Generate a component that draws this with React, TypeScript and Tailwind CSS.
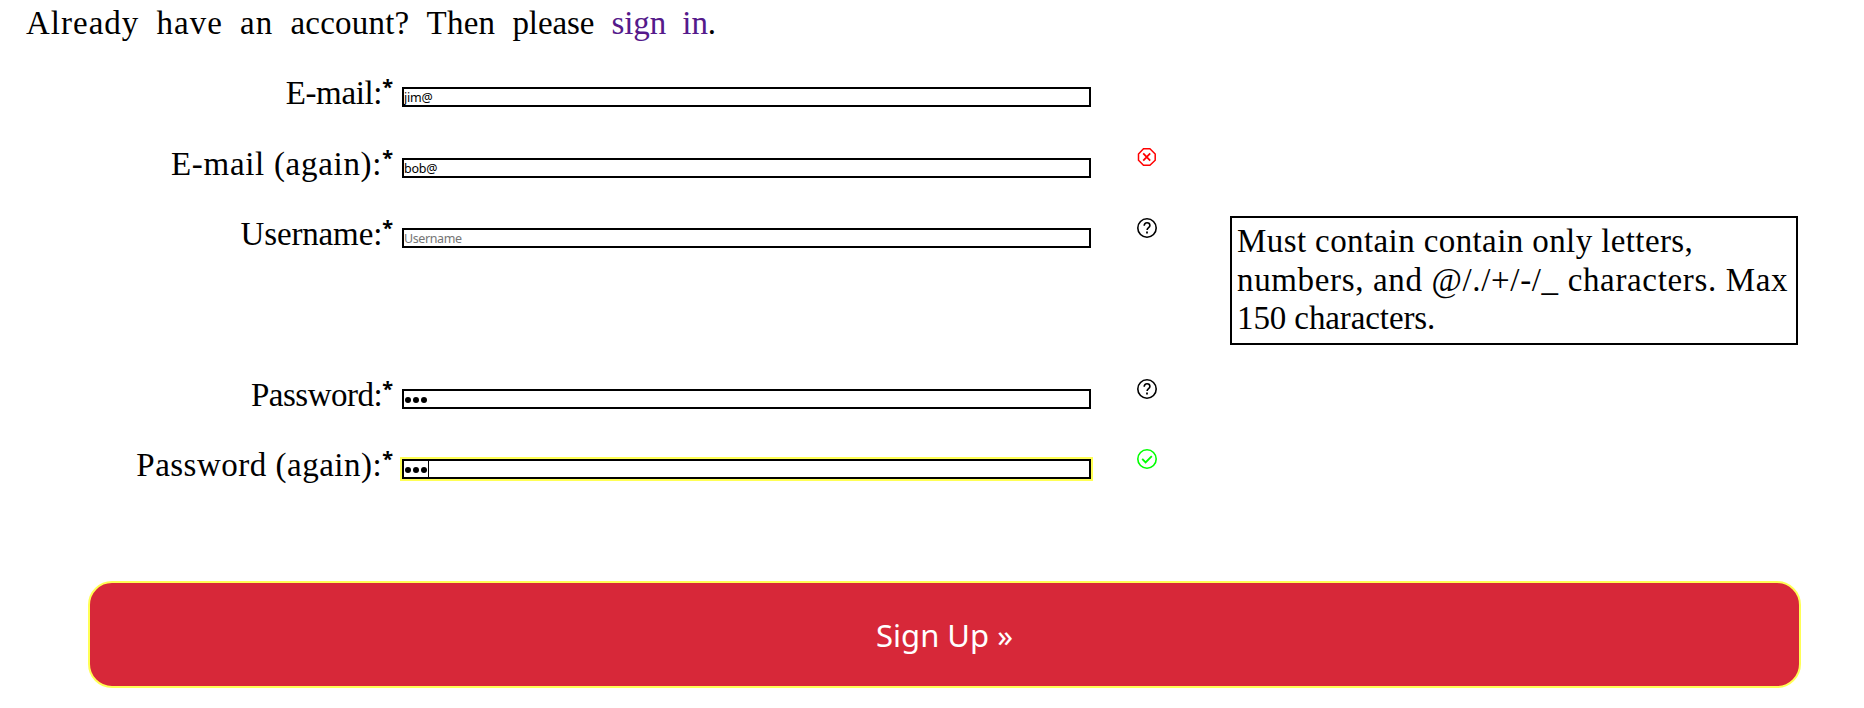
import type { ReactNode } from "react";

const slab = "font-['Liberation_Serif',serif] text-[33px]";

function QuestionIcon() {
  return (
    <svg className="block size-5" viewBox="0 0 20 20" fill="none" stroke="#000">
      <circle cx="10" cy="10" r="9.2" strokeWidth="1.6" />
      <path d="M7.2 7.7C7.2 5.9 8.3 4.8 10 4.8s2.9 1.1 2.9 2.6c0 2.2-2.8 2.3-2.8 4.6" strokeWidth="1.6" />
      <path d="M9.1 13.6h1.8v1.8H9.1z" fill="#000" stroke="none" />
    </svg>
  );
}

function ErrorIcon() {
  return (
    <svg className="block size-5" viewBox="0 0 20 20" fill="none" stroke="#f00" strokeWidth="1.5">
      <path d="M6.5 .8h6.4l5.3 5.2v6.2l-5.3 5.1H6.5l-5-5.1V6z" />
      <path d="M6.2 5.4l7 7.2M13.2 5.4l-7 7.2" strokeWidth="1.8" />
    </svg>
  );
}

function CheckIcon() {
  return (
    <svg className="block size-5" viewBox="0 0 20 20" fill="none" stroke="#0f0">
      <circle cx="10" cy="10" r="9.2" strokeWidth="1.6" />
      <path d="M5.2 9.8l3.4 3.5 6.2-6.2" strokeWidth="1.9" />
    </svg>
  );
}

function Dots() {
  return (
    <svg className="ml-px block h-4 w-6" viewBox="0 0 24 16">
      <circle cx="3" cy="9" r="3" />
      <circle cx="11" cy="9" r="3" />
      <circle cx="19" cy="9" r="3" />
    </svg>
  );
}

type RowProps = {
  label: string;
  tracking: string;
  height: string;
  value: ReactNode;
  focused?: boolean;
  icon?: ReactNode;
  hint?: ReactNode;
};

function Row({ label, tracking, height, value, focused, icon, hint }: RowProps) {
  return (
    <div className={`flex items-start ${height}`}>
      <div className={`flex w-[393px] justify-end pt-[6px] whitespace-pre leading-[40px] ${slab}`}>
        <span className={tracking}>{label}</span>
        <b className="font-['Noto_Sans',sans-serif] text-[20px] leading-[27px]">*</b>
      </div>
      <div
        className={`mt-5 ml-[9px] flex h-5 w-[689px] items-center border-2 border-black font-['Noto_Sans',sans-serif] text-[12.5px] leading-4 ${
          focused ? "outline-2 outline-[#ffff55]" : ""
        }`}
      >
        {value}
      </div>
      <div className="mt-[10px] ml-[46px] w-5">{icon}</div>
      {hint}
    </div>
  );
}

export default function App() {
  return (
    <main className="h-[708px] w-[1864px] overflow-hidden bg-white text-black">
      <p className={`h-[67px] pt-[3px] pl-[26px] leading-[40px] whitespace-nowrap tracking-[1px] [word-spacing:8px] ${slab}`}>
        Already have an <span className="tracking-[0.2px]">account?</span>{" "}
        <span className="tracking-[0.2px]">Then</span> <span className="tracking-[-0.1px]">please</span>{" "}
        <a className="tracking-[-0.1px] text-[#551a8b]">sign in</a>
        <span className="tracking-[-0.1px]">.</span>
      </p>
      <Row label="E-mail:" tracking="tracking-[-0.35px]" height="h-[71px]" value={<span className="pt-0.5 tracking-[-0.2px]">jim@</span>} />
      <Row
        label="E-mail (again):"
        tracking="tracking-[0.7px]"
        height="h-[70px]"
        value={<span className="pt-0.5 tracking-[-0.2px]">bob@</span>}
        icon={<ErrorIcon />}
      />
      <Row
        label="Username:"
        tracking="tracking-[-0.15px]"
        height="h-[161px]"
        value={<span className="pt-0.5 tracking-[-0.4px] text-[#757575]">Username</span>}
        icon={<QuestionIcon />}
        hint={
          <div className={`mt-2 ml-[73px] h-[129px] w-[568px] border-2 border-black pt-[4px] pl-[5px] leading-[38.5px] whitespace-nowrap ${slab}`}>
            <div className="tracking-[0.4px]">Must contain contain only letters,</div>
            <div className="tracking-[0.65px]">numbers, and @/./+/-/_ characters. Max</div>
            <div className="tracking-[-0.1px]">150 characters.</div>
          </div>
        }
      />
      <Row label="Password:" tracking="tracking-[-0.5px]" height="h-[70px]" value={<Dots />} icon={<QuestionIcon />} />
      <Row
        label="Password (again):"
        tracking="tracking-[0.5px]"
        height="h-[142px]"
        value={
          <>
            <Dots />
            <span className="-ml-px h-4 w-px bg-black" />
          </>
        }
        focused
        icon={<CheckIcon />}
      />
      <button className="ml-[88px] flex h-[107px] w-[1713px] items-center justify-center rounded-[24px] border-2 border-[#ffff55] bg-[#d72839] pt-0.5 font-['Noto_Sans',sans-serif] text-[31px] text-white">
        Sign Up »
      </button>
    </main>
  );
}
